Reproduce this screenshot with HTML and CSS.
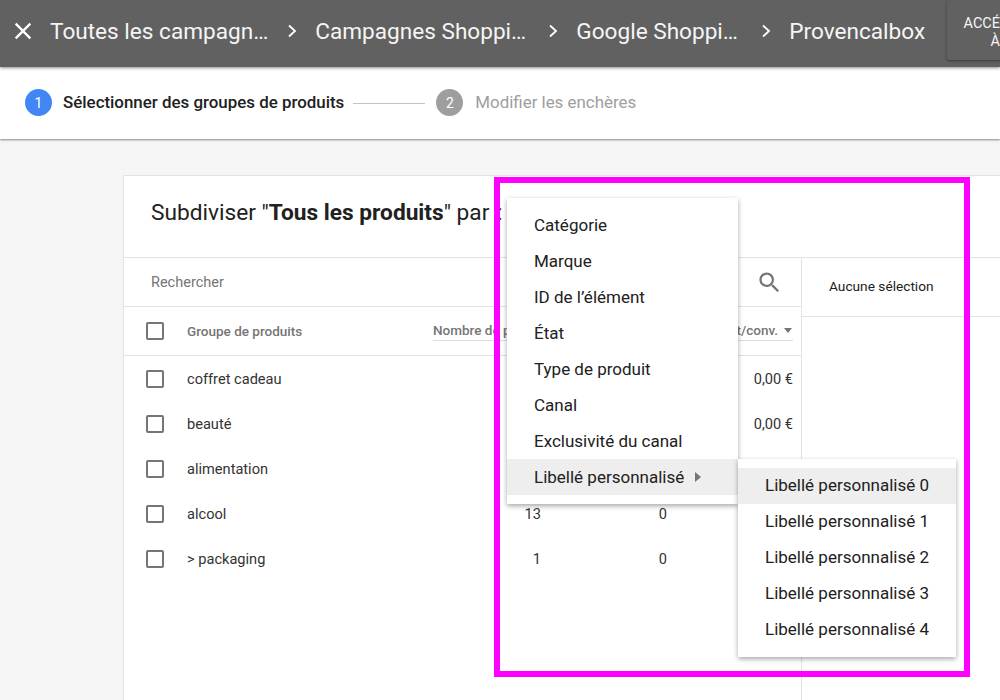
FILE: index.html
```html
<!DOCTYPE html>
<html lang="fr">
<head>
  <meta charset="UTF-8">
  <title>Subdiviser les groupes de produits</title>
  <link rel="stylesheet" href="styles.css">
</head>
<body>
  <header class="topbar">
    <svg class="close-icon" width="28" height="28" viewBox="0 0 24 24"><path d="M19 6.41 17.59 5 12 10.59 6.41 5 5 6.41 10.59 12 5 17.59 6.41 19 12 13.41 17.59 19 19 17.59 13.41 12z" fill="#fff"/></svg>
    <span class="crumb">Toutes les campagn…</span>
    <svg class="crumb-sep" width="10" height="14" viewBox="0 0 10 14"><path d="M2 1.5 8 7 2 12.5" fill="none" stroke="#fff" stroke-width="1.8"/></svg>
    <span class="crumb crumb-campaign">Campagnes Shoppi…</span>
    <svg class="crumb-sep" width="10" height="14" viewBox="0 0 10 14"><path d="M2 1.5 8 7 2 12.5" fill="none" stroke="#fff" stroke-width="1.8"/></svg>
    <span class="crumb crumb-group">Google Shoppi…</span>
    <svg class="crumb-sep" width="10" height="14" viewBox="0 0 10 14"><path d="M2 1.5 8 7 2 12.5" fill="none" stroke="#fff" stroke-width="1.8"/></svg>
    <span class="crumb">Provencalbox</span>
    <button class="access-btn">ACCÉDER À</button>
  </header>

  <div class="stepper">
    <span class="step-num active">1</span>
    <span class="step-label active">Sélectionner des groupes de produits</span>
    <span class="step-line"></span>
    <span class="step-num">2</span>
    <span class="step-label">Modifier les enchères</span>
  </div>

  <main class="card">
    <h2 class="card-title">Subdiviser "<b>Tous les produits</b>" par <span class="colon">:</span></h2>
    <div class="card-body">
      <section class="products">
        <div class="search-row">
          <span class="search-text">Rechercher</span>
          <svg class="search-icon" width="27" height="27" viewBox="0 0 24 24"><path d="M15.5 14h-.79l-.28-.27A6.47 6.47 0 0 0 16 9.5 6.5 6.5 0 1 0 9.5 16c1.61 0 3.09-.59 4.23-1.57l.27.28v.79l5 4.99L20.49 19l-4.99-5zm-6 0C7.01 14 5 11.99 5 9.5S7.01 5 9.5 5 14 7.01 14 9.5 11.99 14 9.5 14z" fill="#757575"/></svg>
        </div>
        <div class="row head-row">
          <span class="checkbox"></span>
          <span>Groupe de produits</span>
          <span class="sort-col">Nombre de produits</span>
          <span></span>
          <span class="sort-col cost-col">Coût/conv.<i class="sort-arrow"></i></span>
        </div>
        <div class="row">
          <span class="checkbox"></span><span>coffret cadeau</span><span></span><span></span><span class="num">0,00 €</span>
        </div>
        <div class="row">
          <span class="checkbox"></span><span>beauté</span><span></span><span></span><span class="num">0,00 €</span>
        </div>
        <div class="row">
          <span class="checkbox"></span><span>alimentation</span><span></span><span></span><span></span>
        </div>
        <div class="row">
          <span class="checkbox"></span><span>alcool</span><span class="num">13</span><span class="num">0</span><span></span>
        </div>
        <div class="row">
          <span class="checkbox"></span><span>&gt; packaging</span><span class="num">1</span><span class="num">0</span><span></span>
        </div>
      </section>
      <aside class="selection">
        <div class="selection-head">Aucune sélection</div>
      </aside>
    </div>
  </main>

  <ul class="menu main-menu">
    <li>Catégorie</li>
    <li>Marque</li>
    <li>ID de l’élément</li>
    <li>État</li>
    <li>Type de produit</li>
    <li>Canal</li>
    <li>Exclusivité du canal</li>
    <li class="hover">Libellé personnalisé <i class="sub-arrow"></i></li>
  </ul>
  <ul class="menu sub-menu">
    <li class="hover">Libellé personnalisé 0</li>
    <li>Libellé personnalisé 1</li>
    <li>Libellé personnalisé 2</li>
    <li>Libellé personnalisé 3</li>
    <li>Libellé personnalisé 4</li>
  </ul>

  <div class="highlight-frame"></div>
</body>
</html>
```

FILE: styles.css
```css
* {
  box-sizing: border-box;
}

html, body {
  height: 700px;
  overflow: hidden;
}

body {
  margin: 0;
  background: #f5f5f5;
  font-family: Roboto, Arial, sans-serif;
  color: #212121;
}

.topbar {
  position: relative;
  z-index: 2;
  display: flex;
  align-items: center;
  height: 67px;
  padding: 0 0 5px 9px;
  background: #616161;
  color: #fff;
  box-shadow: 0 1px 3px rgba(0,0,0,0.45);
}

.close-icon {
  flex: none;
  margin-right: 13px;
}

.crumb {
  flex: none;
  font-size: 22.6px;
  white-space: nowrap;
  color: #f5f5f5;
}

.crumb-campaign {
  width: 214px;
}

.crumb-group {
  width: 166px;
}

.crumb-sep {
  flex: none;
  margin: 0 18px 0 19px;
}

.access-btn {
  flex: none;
  align-self: flex-start;
  width: 96px;
  height: 60px;
  margin-left: 22px;
  padding: 5px 12px 0;
  border: none;
  border-radius: 3px;
  background: #616161;
  color: #f5f5f5;
  font-family: inherit;
  font-size: 14.5px;
  line-height: 18px;
  box-shadow: 0 1px 3px rgba(0,0,0,0.4);
}

.stepper {
  position: relative;
  z-index: 1;
  display: flex;
  align-items: center;
  height: 72px;
  padding: 0 0 1px 25px;
  background: #fff;
  box-shadow: 0 1px 2px rgba(0,0,0,0.45);
}

.step-num {
  display: flex;
  align-items: center;
  justify-content: center;
  width: 27px;
  height: 27px;
  margin-right: 12px;
  border-radius: 50%;
  background: #9e9e9e;
  color: #fff;
  font-size: 14px;
}

.step-num.active {
  margin-right: 11px;
  background: #4285f4;
}

.step-label {
  margin-bottom: 2px;
  font-size: 16.9px;
  color: #9e9e9e;
}

.step-label.active {
  font-weight: 500;
  color: #212121;
}

.step-line {
  width: 72px;
  height: 1px;
  margin: 2px 11px 0 9px;
  background: #c4c4c4;
}

.card {
  width: 900px;
  height: 600px;
  margin: 36px 0 0 123px;
  border: 1px solid #e3e3e3;
  background: #fff;
}

.card-title {
  display: flex;
  align-items: center;
  height: 82px;
  margin: 0;
  padding: 0 0 8px 27px;
  font-size: 22.7px;
  font-weight: 400;
  white-space: pre;
  border-bottom: 1px solid #e3e3e3;
}

.card-title b {
  font-weight: 700;
}

.colon {
  margin-left: 2px;
}

.card-body {
  display: flex;
  height: 520px;
}

.products {
  width: 678px;
  border-right: 1px solid #e3e3e3;
}

.search-row {
  display: flex;
  align-items: center;
  justify-content: space-between;
  height: 49px;
  padding: 0 18px 0 27px;
  border-bottom: 1px solid #e3e3e3;
}

.search-text {
  font-size: 14.5px;
  color: #757575;
}

.search-icon {
  flex: none;
}

.row {
  display: grid;
  grid-template-columns: 41px 246px 108px 126px 126px;
  align-items: center;
  height: 45px;
  padding-left: 22px;
  font-size: 14.6px;
  color: #333;
}

.head-row {
  height: 49px;
  font-size: 13.5px;
  font-weight: 500;
  color: #757575;
  border-bottom: 1px solid #e3e3e3;
}

.checkbox {
  width: 18px;
  height: 18px;
  border: 2px solid #757575;
  border-radius: 2px;
}

.sort-col {
  padding-bottom: 2px;
  border-bottom: 1px solid #ddd;
  white-space: nowrap;
}

.cost-col {
  padding-right: 1px;
  text-align: right;
}

.sort-arrow {
  display: inline-block;
  width: 0;
  height: 0;
  margin: 0 0 2px 6px;
  border: 4px solid transparent;
  border-top: 5px solid #757575;
  border-bottom: none;
}

.num {
  text-align: right;
}

.selection {
  flex: 1;
}

.selection-head {
  display: flex;
  align-items: center;
  height: 59px;
  padding: 0 0 2px 27px;
  font-size: 13.7px;
  border-bottom: 1px solid #e3e3e3;
}

.menu {
  position: absolute;
  z-index: 3;
  margin: 0;
  padding: 9px 0;
  list-style: none;
  background: #fff;
  box-shadow: 0 2px 5px rgba(0,0,0,0.35);
}

.menu li {
  display: flex;
  align-items: center;
  height: 36px;
  padding-bottom: 1px;
  font-size: 17px;
  white-space: nowrap;
}

.menu li.hover {
  background: #eeeeee;
}

.main-menu {
  left: 507px;
  top: 198px;
  width: 231px;
}

.main-menu li {
  padding-left: 27px;
}

.sub-menu {
  left: 738px;
  top: 459px;
  width: 218px;
}

.sub-menu li {
  padding-left: 27px;
  padding-bottom: 2px;
}

.sub-arrow {
  width: 0;
  height: 0;
  margin-left: 11px;
  border: 5px solid transparent;
  border-left: 6px solid #757575;
  border-right: none;
}

.highlight-frame {
  position: absolute;
  z-index: 4;
  left: 494px;
  top: 177px;
  width: 476px;
  height: 500px;
  border: 6px solid #ff00ff;
}
```
